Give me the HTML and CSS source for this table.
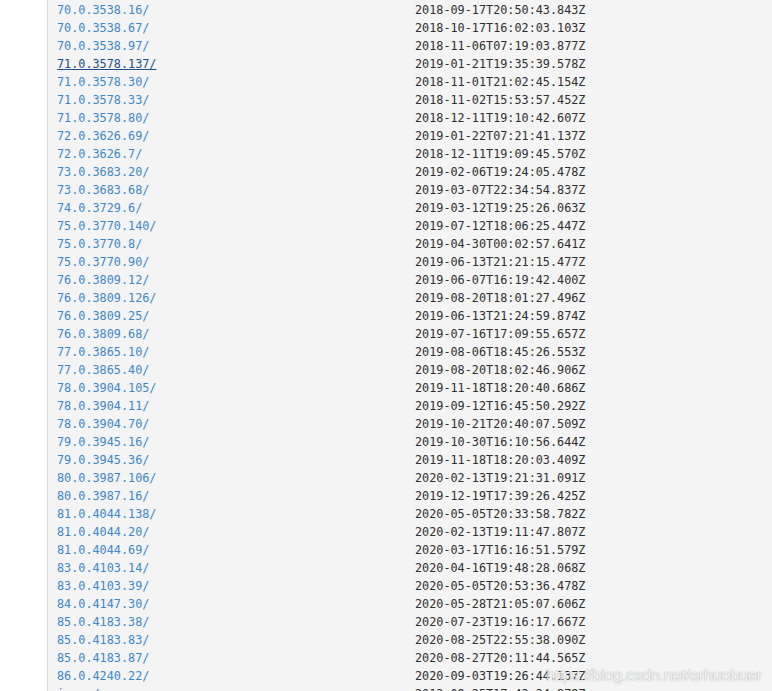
FILE: index.html
```html
<!DOCTYPE html>
<html>
<head>
<meta charset="utf-8">
<link rel="stylesheet" href="styles.css">
</head>
<body>
<div class="page">
  <div class="gutter"></div>
  <div class="content">
    <table class="listing">
      <tbody>
        <tr><td><a href="#">70.0.3538.16/</a></td><td>2018-09-17T20:50:43.843Z</td></tr>
        <tr><td><a href="#">70.0.3538.67/</a></td><td>2018-10-17T16:02:03.103Z</td></tr>
        <tr><td><a href="#">70.0.3538.97/</a></td><td>2018-11-06T07:19:03.877Z</td></tr>
        <tr><td><a href="#" class="hover">71.0.3578.137/</a></td><td>2019-01-21T19:35:39.578Z</td></tr>
        <tr><td><a href="#">71.0.3578.30/</a></td><td>2018-11-01T21:02:45.154Z</td></tr>
        <tr><td><a href="#">71.0.3578.33/</a></td><td>2018-11-02T15:53:57.452Z</td></tr>
        <tr><td><a href="#">71.0.3578.80/</a></td><td>2018-12-11T19:10:42.607Z</td></tr>
        <tr><td><a href="#">72.0.3626.69/</a></td><td>2019-01-22T07:21:41.137Z</td></tr>
        <tr><td><a href="#">72.0.3626.7/</a></td><td>2018-12-11T19:09:45.570Z</td></tr>
        <tr><td><a href="#">73.0.3683.20/</a></td><td>2019-02-06T19:24:05.478Z</td></tr>
        <tr><td><a href="#">73.0.3683.68/</a></td><td>2019-03-07T22:34:54.837Z</td></tr>
        <tr><td><a href="#">74.0.3729.6/</a></td><td>2019-03-12T19:25:26.063Z</td></tr>
        <tr><td><a href="#">75.0.3770.140/</a></td><td>2019-07-12T18:06:25.447Z</td></tr>
        <tr><td><a href="#">75.0.3770.8/</a></td><td>2019-04-30T00:02:57.641Z</td></tr>
        <tr><td><a href="#">75.0.3770.90/</a></td><td>2019-06-13T21:21:15.477Z</td></tr>
        <tr><td><a href="#">76.0.3809.12/</a></td><td>2019-06-07T16:19:42.400Z</td></tr>
        <tr><td><a href="#">76.0.3809.126/</a></td><td>2019-08-20T18:01:27.496Z</td></tr>
        <tr><td><a href="#">76.0.3809.25/</a></td><td>2019-06-13T21:24:59.874Z</td></tr>
        <tr><td><a href="#">76.0.3809.68/</a></td><td>2019-07-16T17:09:55.657Z</td></tr>
        <tr><td><a href="#">77.0.3865.10/</a></td><td>2019-08-06T18:45:26.553Z</td></tr>
        <tr><td><a href="#">77.0.3865.40/</a></td><td>2019-08-20T18:02:46.906Z</td></tr>
        <tr><td><a href="#">78.0.3904.105/</a></td><td>2019-11-18T18:20:40.686Z</td></tr>
        <tr><td><a href="#">78.0.3904.11/</a></td><td>2019-09-12T16:45:50.292Z</td></tr>
        <tr><td><a href="#">78.0.3904.70/</a></td><td>2019-10-21T20:40:07.509Z</td></tr>
        <tr><td><a href="#">79.0.3945.16/</a></td><td>2019-10-30T16:10:56.644Z</td></tr>
        <tr><td><a href="#">79.0.3945.36/</a></td><td>2019-11-18T18:20:03.409Z</td></tr>
        <tr><td><a href="#">80.0.3987.106/</a></td><td>2020-02-13T19:21:31.091Z</td></tr>
        <tr><td><a href="#">80.0.3987.16/</a></td><td>2019-12-19T17:39:26.425Z</td></tr>
        <tr><td><a href="#">81.0.4044.138/</a></td><td>2020-05-05T20:33:58.782Z</td></tr>
        <tr><td><a href="#">81.0.4044.20/</a></td><td>2020-02-13T19:11:47.807Z</td></tr>
        <tr><td><a href="#">81.0.4044.69/</a></td><td>2020-03-17T16:16:51.579Z</td></tr>
        <tr><td><a href="#">83.0.4103.14/</a></td><td>2020-04-16T19:48:28.068Z</td></tr>
        <tr><td><a href="#">83.0.4103.39/</a></td><td>2020-05-05T20:53:36.478Z</td></tr>
        <tr><td><a href="#">84.0.4147.30/</a></td><td>2020-05-28T21:05:07.606Z</td></tr>
        <tr><td><a href="#">85.0.4183.38/</a></td><td>2020-07-23T19:16:17.667Z</td></tr>
        <tr><td><a href="#">85.0.4183.83/</a></td><td>2020-08-25T22:55:38.090Z</td></tr>
        <tr><td><a href="#">85.0.4183.87/</a></td><td>2020-08-27T20:11:44.565Z</td></tr>
        <tr><td><a href="#">86.0.4240.22/</a></td><td>2020-09-03T19:26:44.137Z</td></tr>
        <tr><td><a href="#">icons/</a></td><td>2013-09-25T17:42:24.879Z</td></tr>
      </tbody>
    </table>
  </div>
</div>
<div class="watermark">https://blog.csdn.net/erhuobuer</div>
</body>
</html>
```

FILE: styles.css
```css
html, body {
  margin: 0;
  padding: 0;
  height: 100%;
  overflow: hidden;
  background: #ffffff;
}
.page {
  display: flex;
  min-height: 100%;
}
.gutter {
  width: 47px;
  flex: none;
  background: #ffffff;
}
.content {
  flex: 1;
  background: #f4f4f4;
  border-left: 1px solid #d9d9d9;
  padding: 1px 0 0 9px;
}
.listing {
  border-collapse: collapse;
  font-family: "DejaVu Sans Mono", "Liberation Mono", monospace;
  font-size: 11.8px;
  color: #2f2f2f;
}
.listing td {
  padding: 0;
  height: 18px;
  line-height: 18px;
  white-space: nowrap;
  vertical-align: middle;
}
.listing td:first-child {
  width: 358px;
}
.listing a {
  color: #3c87c9;
  text-decoration: none;
}
.listing a.hover {
  color: #1f4f86;
  text-decoration: underline;
}
.watermark {
  position: absolute;
  left: 546px;
  top: 666px;
  font-family: "Liberation Sans", Arial, sans-serif;
  font-size: 17px;
  letter-spacing: -0.6px;
  color: rgba(255, 255, 255, 0.85);
  text-shadow: 0 0 1px rgba(0, 0, 0, 0.25), 0 0 2px rgba(0, 0, 0, 0.15);
  white-space: nowrap;
}
```
